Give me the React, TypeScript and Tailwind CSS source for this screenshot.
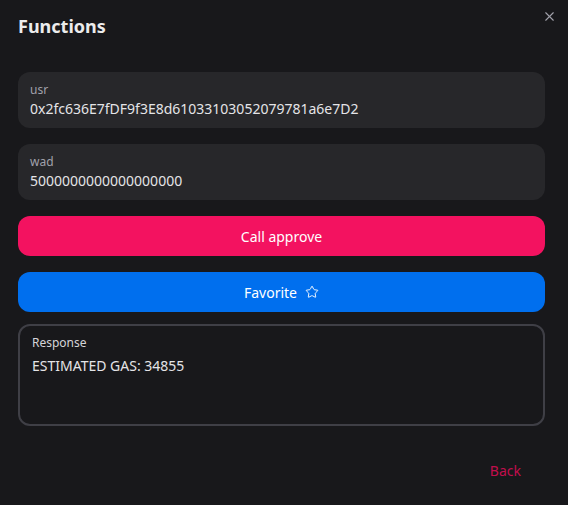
import { X, Star } from "lucide-react";

function Field({ label, value }: { label: string; value: string }) {
  return (
    <div className="flex h-[56px] flex-col justify-center rounded-xl bg-[#27272a] px-3">
      <span className="text-[12px] leading-4 text-[#a1a1aa]">{label}</span>
      <span className="mt-[1px] text-[14px] leading-5 text-[#e4e4e7]">{value}</span>
    </div>
  );
}

export default function App() {
  return (
    <div
      className="relative h-[505px] w-[568px] bg-[#18181b] text-white"
      style={{ fontFamily: '"Noto Sans", "Open Sans", sans-serif' }}
    >
      <button className="absolute right-[10px] top-[7px] flex h-[18px] w-[18px] items-center justify-center text-[#a1a1aa]">
        <X size={15} strokeWidth={1.8} />
      </button>

      <div className="px-[18px] pt-[14px]">
        <h2 className="text-[18px] font-bold leading-6 text-[#ececec]">Functions</h2>
      </div>

      <div className="flex flex-col pl-[18px] pr-[23px] pt-[34px]">
        <Field label="usr" value="0x2fc636E7fDF9f3E8d61033103052079781a6e7D2" />
        <div className="h-[16px]" />
        <Field label="wad" value="5000000000000000000" />

        <button className="mt-[16px] h-[40px] rounded-xl bg-[#f31260] text-[14px] text-white">
          Call approve
        </button>

        <button className="mt-[16px] flex h-[40px] items-center justify-center gap-2 rounded-xl bg-[#006fee] text-[14px] text-white">
          Favorite
          <Star size={14} strokeWidth={1.6} />
        </button>

        <div className="mt-[12px] h-[102px] rounded-xl border-2 border-[#3f3f46] px-3 pt-[9px]">
          <div className="text-[12px] leading-4 text-[#d4d4d8]">Response</div>
          <div className="mt-[5px] text-[14px] leading-5 text-[#e4e4e7]">ESTIMATED GAS: 34855</div>
        </div>
      </div>

      <div className="flex justify-end px-[31px] pt-[30px]">
        <button className="h-[28px] rounded-lg px-4 text-[14px] text-[#c20e4d]">Back</button>
      </div>
    </div>
  );
}
